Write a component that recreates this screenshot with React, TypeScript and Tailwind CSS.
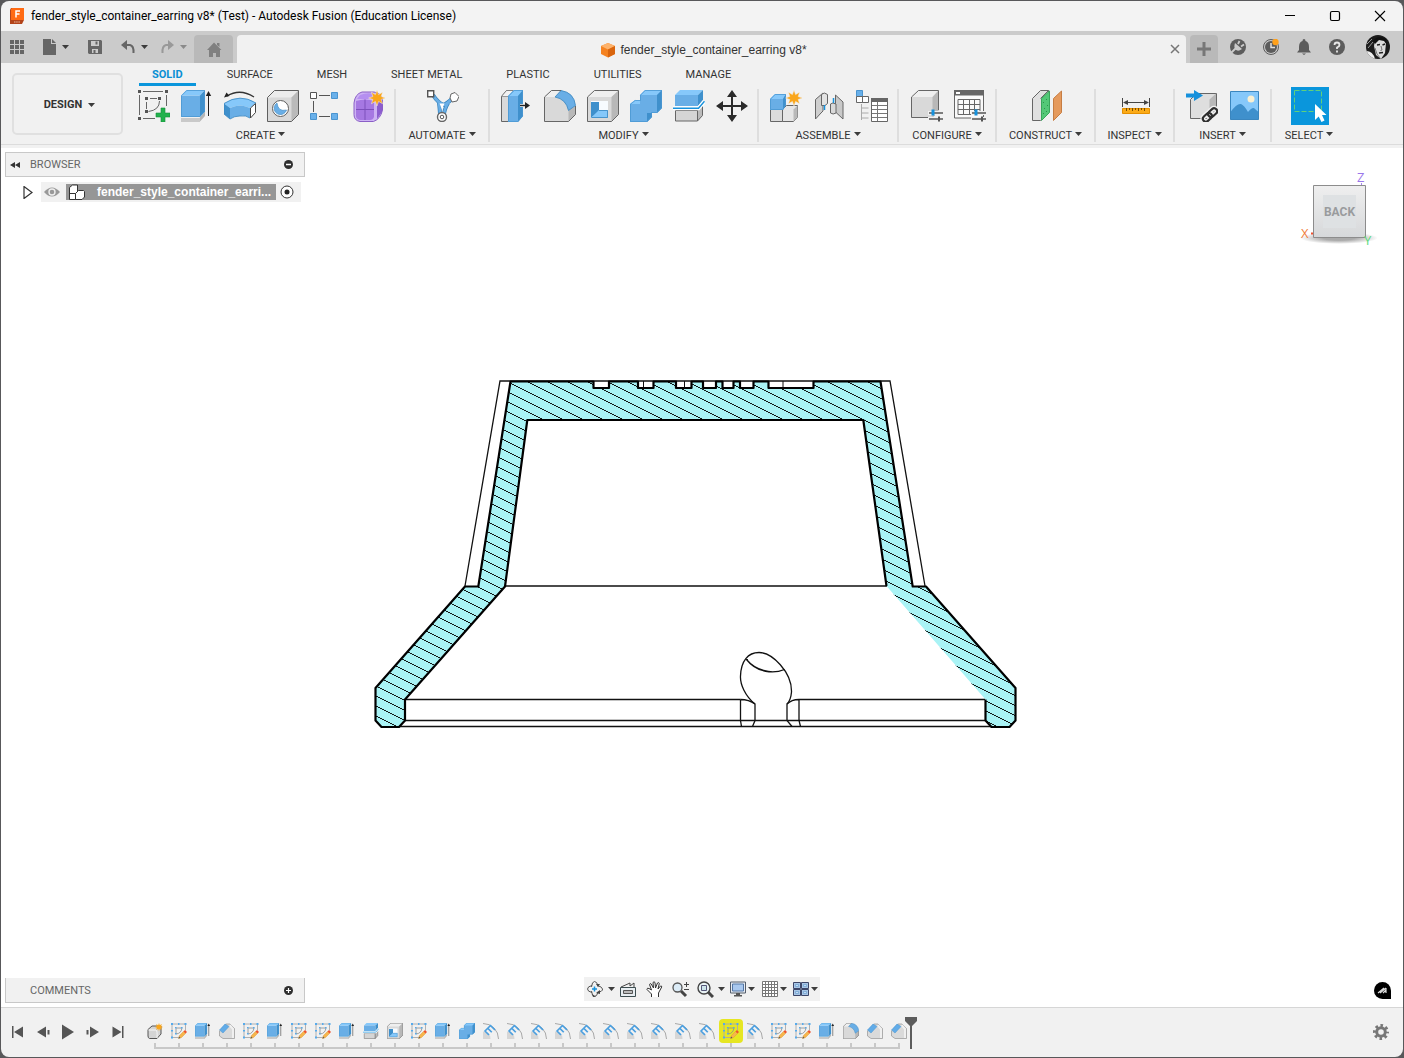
import type { ReactNode } from 'react'

interface IconProps {
  size?: number
}

interface SvgProps extends IconProps {
  box?: number
  children: ReactNode
}

function Svg({ size = 32, box = 32, children }: SvgProps) {
  return (
    <svg
      width={size}
      height={size}
      viewBox={`0 0 ${box} ${box}`}
      fill="none"
      aria-hidden="true"
      className="block shrink-0"
    >
      {children}
    </svg>
  )
}

function Caret({ light = false }: { light?: boolean }) {
  return (
    <svg width="7" height="7" viewBox="0 0 7 7" aria-hidden="true" className="block shrink-0">
      <path d="M0 1h7L3.500 5z" fill={light ? '#8a8a8a' : '#3c3c3c'} />
    </svg>
  )
}

const STAR =
  'M24 0l1.600 4.600 4-2.400-1.400 4.400 4.200 1.400-4.200 1.400 1.400 4.400-4-2.400L24 16l-1.600-4.600-4 2.400 1.400-4.400L15.600 8l4.200-1.400-1.400-4.400 4 2.400z'

/* ---------- Create ---------- */

function SketchIcon({ size }: IconProps) {
  return (
    <Svg size={size}>
      <path d="M5 1.500h20M1.500 5v20M28.500 5v11M5 28.500h12" stroke="#666" />
      <path d="M12 8.500h7M8.500 12v7M21.500 11q0 9-11 10.500" stroke="#666" />
      <path d="M0 0h3v3H0zM27 0h3v3h-3zM0 27h3v3H0zM7 7h3v3H7zM20 7h3v3h-3zM7 20h3v3H7z" fill="#555" />
      <path d="M23 18h4v5h5v4h-5v5h-4v-5h-5v-4h5z" fill="#22b14c" stroke="#16913a" strokeWidth=".6" />
    </Svg>
  )
}

function SketchEditIcon({ size }: IconProps) {
  return (
    <Svg size={size}>
      <path d="M3 2h26v13M2 3v26h13" stroke="#a9a9a9" strokeWidth="1.800" />
      <path d="M10 10h10M10 11v11q11-1 12-13" stroke="#8a8a8a" strokeWidth="1.600" />
      <path d="M0 0h4v4H0zM27 0h4v4h-4zM0 27h4v4H0zM8 8h3v3H8zM20 8h3v3h-3zM8 20h3v3H8zM14 0h3v4h-3zM0 14h4v3H0z" fill="#55aaec" />
      <path d="M15 31l2-6 8-8 4 4-8 8z" fill="#f6b54c" stroke="#e09a34" />
      <path d="M25 17l3-3 4 4-3 3z" fill="#f0532d" />
      <path d="M15 31l1-4 3 3z" fill="#555" />
    </Svg>
  )
}

function ExtrudeIcon({ size }: IconProps) {
  return (
    <Svg size={size}>
      <path d="M0 28h18.500l5.500-6.500v4.500l-5.500 6H0z" fill="#b5b5b5" />
      <path d="M0 28h19v4H0z" fill="#c9c9c9" />
      <path d="M0 5.500h19V27H0z" fill="#69aee6" />
      <path d="M0 5.500L5.500 0H24l-5 5.500z" fill="#86c8fa" />
      <path d="M19 5.500L24 0v21.500L19 27z" fill="#3f90cc" />
      <path d="M.5 5.700L5.700.5h17.800v21L18.700 26.500H.5z" stroke="#4a97d2" strokeWidth=".8" />
      <path d="M27.500 26V5" stroke="#222" />
      <path d="M27.500 1l2.700 5h-5.400z" fill="#222" />
    </Svg>
  )
}

function RevolveIcon() {
  return (
    <Svg>
      <path d="M3 6Q16-2 30 7" stroke="#333" strokeWidth="1.300" />
      <path d="M0 7.500l2.500-5 3 3.600z" fill="#222" />
      <path d="M0 13.500Q16 3 32 13l-6 5Q16 13 6 18z" fill="#86c8fa" />
      <path d="M0 13.500L6 18v11l-6-5z" fill="#3f90cc" />
      <path d="M6 18q10-5 20 0v10q-4-3-10-2-6 0-10 3z" fill="#69aee6" />
      <path d="M0 13.500Q16 3 32 13M0 13.500V24l6 5q4-3 10-3 6-1 10 2" stroke="#3a86bf" strokeWidth=".8" />
      <path d="M26.500 18l5-4.500v9L26.500 28z" fill="#fff" stroke="#444" />
    </Svg>
  )
}

function HoleIcon() {
  return (
    <Svg>
      <path d="M.5 7.500l7-7h24v24l-7 7H.5z" fill="#d9d9d9" />
      <path d="M.5 7.500l7-7h24l-7 7z" fill="#ececec" />
      <path d="M24.500 7.500l7-7v24l-7 7z" fill="#bababa" />
      <path d="M.5 7.500l7-7h24v24l-7 7H.5z" stroke="#5f5f5f" />
      <circle cx="13.500" cy="18.500" r="8" fill="#fff" stroke="#5f5f5f" />
      <path d="M10 13A6.300 6.300 0 1 0 19.500 20Q11 22 10 13z" fill="#69aee6" stroke="#3a86bf" strokeWidth=".6" />
    </Svg>
  )
}

function PatternIcon() {
  return (
    <Svg>
      <path d="M9 5.500h11M3.500 11v11M9 26.500h11" stroke="#555" />
      <path d="M.5 2.500h6v6h-6z" fill="#fff" stroke="#555" />
      <path d="M21.500 2.500h6v6h-6zM.5 23.500h6v6h-6zM21.500 23.500h6v6h-6z" fill="#69b0ea" stroke="#4a94cf" />
    </Svg>
  )
}

function FormIcon() {
  return (
    <Svg>
      <path d="M1 13Q2 4 9 2h12q8 1 8.500 9v9q-2 9-9 11.500H7q-6-1-6-7z" fill="#cdb2f4" stroke="#8a5fc6" />
      <path d="M7 5q7-3 14-1l-3 5H4z" fill="#b58ff0" />
      <path d="M3 11q9-3 18 0v16q-1 3-4 3H7q-4-1-4-4z" fill="#a678e2" />
      <path d="M24 12l5-4v14l-5 7z" fill="#8c5dce" />
      <path d="M12 9.500V30M3 19.500h18" stroke="#7d50bb" />
      <path d={STAR} fill="#faa61a" stroke="#f1f1f1" strokeWidth=".5" />
    </Svg>
  )
}

/* ---------- Automate ---------- */

function AutomateIcon() {
  return (
    <Svg>
      <path d="M6 5q5 8 11 10 5-3 9-7M12 13q1 8 1 12M21 13q-4 7-4 12" stroke="#3a86bf" strokeWidth="4" />
      <path d="M6 5q5 8 11 10 5-3 9-7M12 13q1 8 1 12M21 13q-4 7-4 12" stroke="#69aee6" strokeWidth="2.500" />
      <path d="M12.500 13.500h5l-2.500 6z" fill="#fff" />
      <path d="M.7.700h6v6h-6z" fill="#fff" stroke="#555" strokeWidth="1.400" />
      <path d="M24 4l4-1.500 4 4-2 4.500-5 1-2-4z" fill="#fff" stroke="#666" />
      <circle cx="15" cy="27" r="4.500" fill="#fff" stroke="#666" strokeWidth="1.400" />
      <circle cx="15" cy="27" r="1.800" fill="#fff" stroke="#555" />
    </Svg>
  )
}

/* ---------- Modify ---------- */

function PressPullIcon() {
  return (
    <Svg>
      <path d="M.5 6.500l5-6h7v31H.5z" fill="#dadada" stroke="#666" />
      <path d="M.5 6.500l5-6h7l-5 6z" fill="#f2f2f2" stroke="#666" strokeWidth=".6" />
      <path d="M7 6l6-6h9v26l-5 6H7z" fill="#69aee6" />
      <path d="M7 6l6-6h9l-5 6z" fill="#86c8fa" />
      <path d="M17 6l5-6v26l-5 6z" fill="#3f90cc" />
      <path d="M7.500 6.200L13.200.5h8.300v25.300L16.800 31.500H7.500z" stroke="#4a97d2" strokeWidth=".8" />
      <path d="M19 15.500h7" stroke="#fff" strokeWidth="3" />
      <path d="M19 15.500h7" stroke="#222" strokeWidth="1.400" />
      <path d="M24 12l5 3.500-5 3.500z" fill="#222" />
    </Svg>
  )
}

function FilletIcon({ size }: IconProps) {
  return (
    <Svg size={size}>
      <path d="M.5 7l7-6.500h10q12 3 14 16v8l-7 7H.5z" fill="#d9d9d9" />
      <path d="M.5 7l7-6.500h9L11 7z" fill="#efefef" />
      <path d="M24.500 20l7-4v8.500l-7 7z" fill="#b8b8b8" />
      <path d="M11 7L17 .5q13 2 14.500 15l-7 5Q22 9 11 7z" fill="#69aee6" stroke="#3a86bf" strokeWidth=".8" />
      <path d="M17 .5h-9.500L.5 7v24.500h24l7-7V16" stroke="#666" />
    </Svg>
  )
}

function ChamferIcon() {
  return (
    <Svg size={16}>
      <path d="M1 16L14 2h8l9 9v20H8l-7-5z" fill="#dadada" stroke="#9a9a9a" strokeWidth="1.500" />
      <path d="M20 6l3-3 7 8v19h-4V13z" fill="#f0f0f0" />
      <path d="M1 14L12 2l8 5L8 20z" fill="#62ace8" stroke="#4a97d2" />
    </Svg>
  )
}

function ShellIcon({ size }: IconProps) {
  return (
    <Svg size={size}>
      <path d="M.5 7l7-6.500h24v24l-7 7H.5z" fill="#d9d9d9" />
      <path d="M.5 7l7-6.500h24l-7 6.500z" fill="#efefef" />
      <path d="M24.500 7l7-6.500v24l-7 7z" fill="#b8b8b8" />
      <path d="M.5 7l7-6.500h24v24l-7 7H.5z" stroke="#666" />
      <path d="M4 11h17v17H4z" fill="#f7fbff" />
      <path d="M4 12h8v9l-8 7z" fill="#3f90cc" />
      <path d="M12 20h9v8H4z" fill="#86c8fa" />
      <path d="M12 20.500h8.500v7H4.500" stroke="#3a86bf" strokeWidth=".8" />
    </Svg>
  )
}

function CombineIcon({ size }: IconProps) {
  return (
    <Svg size={size}>
      <path d="M0 14l5-4h5V5l5-5h17v18l-5 5h-5v4l-5 5H0z" fill="#69aee6" />
      <path d="M10 5l5-5h17l-5 5zM0 14l5-4h5v4z" fill="#86c8fa" />
      <path d="M27 5l5-5v18l-5 5zM17 23h5v4l-5 5z" fill="#3f90cc" />
      <path d="M.5 14.200L5.200 10.500h5.300V5.200L15.200.5h16.300v17.300l-4.700 4.700h-5.300v4.300l-4.700 4.700H.5z" stroke="#4a97d2" strokeWidth=".8" />
    </Svg>
  )
}

function SplitIcon({ size }: IconProps) {
  return (
    <Svg size={size}>
      <path d="M2 5l5-5h23l-5 5z" fill="#86c8fa" />
      <path d="M2 5h23v11H2z" fill="#69aee6" />
      <path d="M25 5l5-5v10l-5 6z" fill="#3f90cc" />
      <path d="M2.500 20.500h22v10.500h-22z" fill="#d5d5d5" stroke="#666" />
      <path d="M24.500 20.500l5-5v10l-5 5.500z" fill="#bbb" stroke="#666" />
      <path d="M0 18.300h25.500l6-7" stroke="#fff" strokeWidth="4" />
      <path d="M0 18.300h25.500l6-7" stroke="#1691dc" strokeWidth="1.400" />
    </Svg>
  )
}

function MoveIcon() {
  return (
    <Svg>
      <path d="M16 5v22M5 16h22" stroke="#2b2b2b" strokeWidth="2" />
      <path d="M16 0l5 7H11zM16 32l5-7H11zM0 16l7-5v10zM32 16l-7-5v10z" fill="#2b2b2b" />
    </Svg>
  )
}

/* ---------- Assemble ---------- */

function NewComponentIcon() {
  return (
    <Svg>
      <path d="M.5 19.500h12v12H.5z" fill="#dcdcdc" stroke="#666" />
      <path d="M12.500 19.500l4-4h11v12l-4 4h-11z" fill="#e6e6e6" stroke="#666" />
      <path d="M23.500 19.500l4-4v12l-4 4z" fill="#b9b9b9" />
      <path d="M0 9l5-5h11v11l-3 5H0z" fill="#69aee6" />
      <path d="M0 9l5-5h11l-3 5z" fill="#86c8fa" />
      <path d="M13 9l3-5v11l-3 5z" fill="#3f90cc" />
      <path d="M.5 9.200L5.200 4.500h10.300v11L12.500 19.500H.5z" stroke="#4a97d2" strokeWidth=".8" />
      <path d={STAR} fill="#faa61a" stroke="#f1f1f1" strokeWidth=".5" />
    </Svg>
  )
}

function JointIcon() {
  return (
    <Svg>
      <path d="M2.500 9.500L10 3v18l-2 2-5.500 6z" fill="#cfcfcf" stroke="#666" />
      <path d="M8.500 4.500q2.500-3 6 0v9q-2 3-6 2z" fill="#e3e3e3" stroke="#666" />
      <path d="M22.500 5l7.500 7v17l-7.500-7z" fill="#c9c9c9" stroke="#666" />
      <path d="M17.500 14q2-2 5.500 0v9q-3 2-5.500 0z" fill="#d9d9d9" stroke="#666" />
      <path d="M11.500 15v5M20.500 8v5" stroke="#1691dc" strokeWidth="1.500" />
    </Svg>
  )
}

function PartsListIcon() {
  return (
    <Svg>
      <path d="M.5.500h6v6h-6z" fill="#69b0ea" stroke="#4a94cf" />
      <path d="M.5 6.500h6v6h-6zM6.500 6.500h6v6h-6z" fill="#fff" stroke="#666" />
      <path d="M5.500 14v16M5.500 18h7M5.500 23h7M5.500 28h7" stroke="#aaa" />
      <path d="M15.500 8.500h16v23h-16z" fill="#fff" stroke="#666" />
      <path d="M15 8h17v4H15z" fill="#666" />
      <path d="M16 15.500h15M16 19.500h15M16 23.500h15M16 27.500h15M21.500 12v19" stroke="#777" />
    </Svg>
  )
}

/* ---------- Configure ---------- */

function Sliders() {
  return (
    <>
      <path d="M17 23h15M17 29h15" stroke="#f1f1f1" strokeWidth="4" />
      <path d="M18 23h14M18 29h14" stroke="#555" strokeWidth="1.500" />
      <path d="M22 19.500v6" stroke="#1691dc" strokeWidth="3" />
      <path d="M28 26.500v5" stroke="#555" strokeWidth="2" />
    </>
  )
}

function ConfigureIcon() {
  return (
    <Svg>
      <path d="M.5 7l7-6.500h20v21l-6 6H.5z" fill="#d9d9d9" />
      <path d="M.5 7l7-6.500h20l-6 6.500z" fill="#efefef" />
      <path d="M21.500 7l6-6.500v21l-6 6z" fill="#b8b8b8" />
      <path d="M27.500 20V.5h-20L.5 7v20.500H17" stroke="#666" />
      <Sliders />
    </Svg>
  )
}

function ConfigTableIcon() {
  return (
    <Svg>
      <path d="M.5.500h29v27.500H.5z" fill="#fafafa" stroke="#666" />
      <path d="M0 0h30v5.500H0z" fill="#666" />
      <path d="M2 2h4v2H2z" fill="#fff" />
      <path d="M4 9.500h22v15H4zM4 14.500h22M4 19.500h22M9.500 9.500v15M15.500 9.500v15M20.500 9.500v15" stroke="#666" />
      <Sliders />
    </Svg>
  )
}

function ConstructIcon() {
  return (
    <Svg>
      <path d="M1.500 8.500l8-8h8v22l-8 8h-8z" fill="#e0e0e0" stroke="#666" />
      <path d="M9.500 8.500l8-8" stroke="#666" />
      <path d="M10.500 8.500l8-7.500v21.500l-8 8z" fill="#53c877" stroke="#39a65b" />
      <path d="M12.500 12v1M15.500 9v1M13.500 18v1M16.500 15v1M12.500 23v1M15.500 21v1" stroke="#2e8f4d" />
      <path d="M22.500 8.500l8-7.500v21.500l-8 8z" fill="#e59a5d" stroke="#c67d43" />
    </Svg>
  )
}

function MeasureIcon() {
  return (
    <Svg>
      <path d="M2.500 8v9M29.500 8v9M4 12.500h24" stroke="#444" />
      <path d="M3 12.500l5-2.500v5zM29 12.500l-5-2.500v5z" fill="#444" />
      <path d="M2.500 18.500h27v5h-27z" fill="#fbab18" stroke="#e58f00" />
      <path d="M6.500 18v3M9.500 18v2M12.500 18v3M15.500 18v2M18.500 18v3M21.500 18v2M24.500 18v3" stroke="#7a4e00" />
    </Svg>
  )
}

function InsertIcon() {
  return (
    <Svg>
      <path d="M4.500 9.500l6-6h20v20l-5 5h-21z" fill="#dedede" stroke="#666" />
      <path d="M23.500 9.500l6.500-6v19l-6.500 6z" fill="#b8b8b8" />
      <path d="M0 3.500h8V0l9 5.500L8 11V7.500H0z" fill="#1691dc" />
      <g transform="rotate(-42 24 25)" strokeWidth="5" stroke="#f1f1f1">
        <rect x="15.500" y="22" width="10" height="6" rx="3" />
        <rect x="22.500" y="22" width="10" height="6" rx="3" />
      </g>
      <g transform="rotate(-42 24 25)" strokeWidth="2.200" stroke="#2f2f2f">
        <rect x="15.500" y="22" width="10" height="6" rx="3" />
        <rect x="22.500" y="22" width="10" height="6" rx="3" />
      </g>
    </Svg>
  )
}

function CanvasImageIcon() {
  return (
    <Svg>
      <path d="M1.500 1.500h28v28h-28z" fill="#86c8fa" />
      <path d="M1.500 22Q8 13 12 14q3 1 7 8 5-6 7-3l3.500 3v7.500h-28z" fill="#3f90cc" />
      <circle cx="22" cy="9" r="3.500" fill="#faf0d2" />
      <path d="M1.500 1.500h28v28h-28z" stroke="#3a86bf" />
    </Svg>
  )
}

function SelectIcon() {
  return (
    <Svg size={38} box={38}>
      <path d="M0 0h38v38H0z" fill="#0a96dc" />
      <path d="M3.500 3.500h27v21h-27z" stroke="#5fd07c" strokeDasharray="5 2" />
      <path d="M24 17v16l3.700-3.500L30.500 35l3-1.500L31 28h4.500z" fill="#fff" />
    </Svg>
  )
}

/* ---------- Timeline ---------- */

function BaseFeatureIcon() {
  return (
    <Svg size={16}>
      <path d="M2 13l8-7h18v16l-8 9H5q-3-1-3-5z" fill="#d4d4d4" stroke="#555" strokeWidth="2" />
      <path d="M3 14h15q3 1 2 16" stroke="#f7f7f7" strokeWidth="2" />
      <path d={STAR} fill="#faa61a" />
    </Svg>
  )
}

function EmbossIcon() {
  return (
    <Svg size={16}>
      <path d="M0 1q13 0 22 9 9 9 9 22" stroke="#a8a8a8" strokeWidth="2" />
      <path d="M0 17q15 0 15 15H0z" fill="#d6d6d6" />
      <path d="M3 17L16 4M4 16l8 8M9.500 10.500l8 8M15 5l9 9" stroke="#4a9fe0" strokeWidth="3.500" />
    </Svg>
  )
}

interface Group {
  label: string
  width: string
  icons: [string, ReactNode][]
}

const GROUPS: Group[] = [
  {
    label: 'CREATE',
    width: 'w-[269px]',
    icons: [
      ['Create Sketch', <SketchIcon />],
      ['Extrude', <ExtrudeIcon />],
      ['Revolve', <RevolveIcon />],
      ['Hole', <HoleIcon />],
      ['Pattern', <PatternIcon />],
      ['Create Form', <FormIcon />],
    ],
  },
  { label: 'AUTOMATE', width: 'w-[94px]', icons: [['Automate', <AutomateIcon />]] },
  {
    label: 'MODIFY',
    width: 'w-[269px]',
    icons: [
      ['Press Pull', <PressPullIcon />],
      ['Fillet', <FilletIcon />],
      ['Shell', <ShellIcon />],
      ['Combine', <CombineIcon />],
      ['Split Body', <SplitIcon />],
      ['Move', <MoveIcon />],
    ],
  },
  {
    label: 'ASSEMBLE',
    width: 'w-[140px]',
    icons: [
      ['New Component', <NewComponentIcon />],
      ['Joint', <JointIcon />],
      ['Parts List', <PartsListIcon />],
    ],
  },
  {
    label: 'CONFIGURE',
    width: 'w-[98px]',
    icons: [
      ['Configure', <ConfigureIcon />],
      ['Configuration Table', <ConfigTableIcon />],
    ],
  },
  { label: 'CONSTRUCT', width: 'w-[99px]', icons: [['Offset Plane', <ConstructIcon />]] },
  { label: 'INSPECT', width: 'w-[79px]', icons: [['Measure', <MeasureIcon />]] },
  {
    label: 'INSERT',
    width: 'w-[97px]',
    icons: [
      ['Insert Derive', <InsertIcon />],
      ['Canvas', <CanvasImageIcon />],
    ],
  },
  { label: 'SELECT', width: 'w-[74px]', icons: [['Select', <SelectIcon />]] },
]

const TABS = ['SOLID', 'SURFACE', 'MESH', 'SHEET METAL', 'PLASTIC', 'UTILITIES', 'MANAGE']

const FEATURE_ICONS: Record<string, ReactNode> = {
  base: <BaseFeatureIcon />,
  sketch: <SketchEditIcon size={16} />,
  extrude: <ExtrudeIcon size={16} />,
  chamfer: <ChamferIcon />,
  split: <SplitIcon size={16} />,
  shell: <ShellIcon size={16} />,
  combine: <CombineIcon size={16} />,
  emboss: <EmbossIcon />,
  fillet: <FilletIcon size={16} />,
}

const FEATURES = [
  'base', 'sketch', 'extrude', 'chamfer', 'sketch', 'extrude', 'sketch', 'sketch',
  'extrude', 'split', 'shell', 'sketch', 'extrude', 'combine', 'emboss', 'emboss',
  'emboss', 'emboss', 'emboss', 'emboss', 'emboss', 'emboss', 'emboss', 'emboss',
  'sketch', 'emboss', 'sketch', 'sketch', 'extrude', 'fillet', 'chamfer', 'chamfer',
]
const ACTIVE_FEATURE = 24

function TitleBar() {
  return (
    <header className="flex h-[30px] shrink-0 items-center bg-[#f3f3f3] pl-2">
      <Svg size={16} box={16}>
        <path d="M2 0h13v12l-2 4H1V2z" fill="#b3441a" />
        <path d="M3 0h12v12H2V1z" fill="#ff6a13" />
        <path d="M7 9.500V3h4M7 6h3.500" stroke="#fff" strokeWidth="1.500" />
        <path d="M5 14h6" stroke="#e9b9a2" strokeWidth="1.200" strokeDasharray="1.500 .7" />
      </Svg>
      <h1 className="ml-1.5 text-xs text-black">
        fender_style_container_earring v8* (Test) - Autodesk Fusion (Education License)
      </h1>
      <div className="ml-auto flex h-full">
        <button aria-label="Minimize" className="flex w-[45px] items-center justify-center">
          <Svg size={12} box={12}>
            <path d="M1 5.500h10" stroke="#000" />
          </Svg>
        </button>
        <button aria-label="Maximize" className="flex w-[45px] items-center justify-center">
          <Svg size={12} box={12}>
            <rect x="1.500" y="1.500" width="9" height="9" rx="1.500" stroke="#000" strokeWidth="1.200" />
          </Svg>
        </button>
        <button aria-label="Close" className="flex w-[46px] items-center justify-center">
          <Svg size={12} box={12}>
            <path d="M1 1l10 10M11 1L1 11" stroke="#000" strokeWidth="1.100" />
          </Svg>
        </button>
      </div>
    </header>
  )
}

function DocumentBar() {
  return (
    <div className="flex h-8 shrink-0 items-stretch bg-[#cbcbcb]">
      <div className="flex w-[193px] shrink-0 items-center pl-[9px]">
        <button aria-label="Data panel">
          <Svg size={14} box={14}>
            <path d="M0 0h4v4H0zM5 0h4v4H5zM10 0h4v4h-4zM0 5h4v4H0zM5 5h4v4H5zM10 5h4v4h-4zM0 10h4v4H0zM5 10h4v4H5zM10 10h4v4h-4z" fill="#666" />
          </Svg>
        </button>
        <button aria-label="File" className="ml-[18px] flex items-center gap-1">
          <Svg size={16} box={16}>
            <path d="M1 0h8v5h5v11H1zM10 0l4 4h-4z" fill="#666" />
          </Svg>
          <Caret />
        </button>
        <button aria-label="Save" className="ml-[18px]">
          <Svg size={16} box={16}>
            <path d="M1 1h13l1 1v13H2l-1-1zM4 2v5h8V2zM5 10v4h6v-4z" fill="#666" fillRule="evenodd" />
            <path d="M8.500 2.500h2v3h-2zM6.500 11h2v3h-2z" fill="#666" />
          </Svg>
        </button>
        <button aria-label="Undo" className="ml-[18px] flex items-center gap-1">
          <Svg size={16} box={16}>
            <path d="M3 6h6q4 1 3.500 8" stroke="#666" strokeWidth="2" />
            <path d="M0 6l6-5v10z" fill="#666" />
          </Svg>
          <Caret />
        </button>
        <button aria-label="Redo" className="ml-3 flex items-center gap-1">
          <Svg size={16} box={16}>
            <path d="M11 6H6q-4 1-3.500 8" stroke="#999" strokeWidth="2" />
            <path d="M14 6L8 1v10z" fill="#999" />
          </Svg>
          <Caret light />
        </button>
      </div>
      <button
        aria-label="Home"
        className="mt-1 flex w-[39px] shrink-0 items-center justify-center rounded-t bg-[#b9b9b9]"
      >
        <Svg size={16} box={16}>
          <path d="M8 1.500l7.500 7.500H14v7h-4v-4H7v4H3V9H1zM11 2h2.500v4L11 4z" fill="#808080" />
        </Svg>
      </button>
      <div className="mt-1 ml-1 flex flex-1 items-center rounded-t bg-[#f1f1f1] text-xs text-[#333]">
        <div className="flex flex-1 items-center justify-center gap-1 pt-0.5 font-['Liberation_Sans',sans-serif]">
          <Svg size={16} box={16}>
            <path d="M1 4l7-3 7 3v8l-7 3.500L1 12z" fill="#f58220" />
            <path d="M1 4l7-3 7 3-7 3.500z" fill="#fdb26b" />
            <path d="M8 7.500L15 4v8l-7 3.500z" fill="#d9650e" />
          </Svg>
          fender_style_container_earring v8*
        </div>
        <button aria-label="Close tab" className="mr-1.5">
          <Svg size={10} box={10}>
            <path d="M1 1l8 8M9 1L1 9" stroke="#777" strokeWidth="1.500" />
          </Svg>
        </button>
      </div>
      <button
        aria-label="New tab"
        className="mt-1 ml-1 flex w-7 items-center justify-center rounded-t bg-[#b9b9b9]"
      >
        <Svg size={14} box={14}>
          <path d="M7 0v14M0 7h14" stroke="#777" strokeWidth="3" />
        </Svg>
      </button>
      <div className="flex items-center gap-[17px] pr-[13px] pl-3">
        <button aria-label="Extensions">
          <Svg size={16} box={16}>
            <circle cx="8" cy="8" r="8" fill="#5c5c5c" />
            <path d="M1 14l6-6M9.500 2L8 5M14 5.500l-3 2" stroke="#cbcbcb" strokeWidth="1.800" />
            <path d="M5 4l7 6Q8 13 5.500 10.500 3.500 8 5 4z" fill="#cbcbcb" />
          </Svg>
        </button>
        <button aria-label="Job status">
          <Svg size={16} box={16}>
            <circle cx="8" cy="8" r="7.500" fill="#cbcbcb" stroke="#5c5c5c" />
            <circle cx="8" cy="8" r="6" fill="#5c5c5c" />
            <path d="M8 4v4.500h4" stroke="#e0e0e0" strokeWidth="1.500" />
            <circle cx="12.500" cy="3" r="3.200" fill="#ffa01a" />
          </Svg>
        </button>
        <button aria-label="Notifications">
          <Svg size={16} box={16}>
            <path d="M8 0q1.500 0 1.500 2Q13 3 13 8v3l2 2.500H1L3 11V8q0-5 3.500-6Q6.500 0 8 0zM6 14.500h4L8 16z" fill="#5c5c5c" />
          </Svg>
        </button>
        <button aria-label="Help">
          <Svg size={16} box={16}>
            <circle cx="8" cy="8" r="8" fill="#5c5c5c" />
            <path d="M5.500 6q0-2.500 2.500-2.500T10.500 6Q10.500 7.500 8 8.500v1.500M8 11.500v2" stroke="#e6e6e6" strokeWidth="1.800" />
          </Svg>
        </button>
        <button aria-label="Account" className="ml-1 overflow-hidden rounded-full">
          <Svg size={24} box={24}>
            <path d="M0 0h24v24H0z" fill="#1c1c1c" />
            <path d="M9 5q8-5 11 3l-1 10-4 6-5-4-2-9z" fill="#dcdcdc" />
            <path d="M7 6Q12-1 20 4l1 6-3-4-5-1-4 4z" fill="#111" />
            <path d="M11 10l3-.5M16.500 10l2.500-1M13 18l4-.5" stroke="#222" strokeWidth="1.400" />
            <path d="M0 16q7 0 9 8H0z" fill="#ededed" />
            <path d="M15 11l1 4-1.500.5M9 13l2 6 3 4" stroke="#777" />
            <path d="M1 9l5-5M2 13l5-6" stroke="#999" />
          </Svg>
        </button>
      </div>
    </div>
  )
}

function Ribbon() {
  return (
    <div className="flex h-[85px] shrink-0 flex-col border-b-[3px] border-[#f1f1f1] bg-[#f1f1f1] text-[11px] leading-[14px] text-[#333]">
      <div className="flex flex-1 border-b border-[#dcdcdc]">
        <button className="mt-2.5 ml-[11px] flex h-[62px] w-[111px] shrink-0 items-center justify-center gap-1.5 rounded-[5px] border-2 border-[#e0e0e0] pt-0.5 pl-1 font-bold">
          DESIGN
          <Caret />
        </button>
        <div className="flex flex-1 flex-col pl-1">
          <nav className="flex h-[23px] gap-[18px] pl-3">
            {TABS.map((tab, i) => (
              <button
                key={tab}
                className={`border-b-[3px] px-[13px] pt-[3px] whitespace-nowrap ${
                  i === 0 ? 'border-[#0a96dc] font-bold text-[#0a8fd4]' : 'border-transparent'
                }`}
              >
                {tab}
              </button>
            ))}
          </nav>
          <div className="mt-px flex flex-1">
            {GROUPS.map((group, i) => (
              <div key={group.label} className={`flex shrink-0 ${group.width}`}>
                <div className="flex flex-1 flex-col items-center">
                  <div className="flex h-[38px] items-center gap-[11px] pl-0.5">
                    {group.icons.map(([name, icon]) => (
                      <button key={name} aria-label={name}>
                        {icon}
                      </button>
                    ))}
                  </div>
                  <button className="mt-1 flex items-start gap-[3px] whitespace-nowrap">
                    {group.label}
                    <span className="pt-0.5">
                      <Caret />
                    </span>
                  </button>
                </div>
                {i < GROUPS.length - 1 && <div className="my-0.5 w-0.5 bg-[#dedede]" />}
              </div>
            ))}
          </div>
        </div>
      </div>
    </div>
  )
}

const SECTION =
  'M510.500 381.500H593.500V388H609V381.500H638V388H653.500V381.500H676V388H691.500V381.500H703V388H716V381.500H722.500V388H733.500V381.500H740V388H753.500V381.500H768.500V388H813.500V381.500H880.500L912.700 586.500H926L1015.500 688V720.500L1009.500 727H991.500L985.500 720.500V699.500L886.500 586L863.300 420H527.300L505 586.500L405 699.500V720.500L399 727H381.500L375.500 720.500V688L465 586.500H478.300z'

// The inner edge of the right flank stays without an outline
const OUTLINE =
  'M886.500 586L863.300 420H527.300L505 586.500L405 699.500V720.500L399 727H381.500L375.500 720.500V688L465 586.500H478.300L510.500 381.500H593.500V388H609V381.500H638V388H653.500V381.500H676V388H691.500V381.500H703V388H716V381.500H722.500V388H733.500V381.500H740V388H753.500V381.500H768.500V388H813.500V381.500H880.500L912.700 586.500H926L1015.500 688V720.500L1009.500 727H991.500L985.500 720.500V699.500'

const HATCH = Array.from({ length: 66 }, (_, i) => -102 + i * 10)

function SectionView() {
  return (
    <svg
      width="670"
      height="370"
      viewBox="360 370 670 370"
      fill="none"
      role="img"
      aria-label="Section view"
      className="block shrink-0"
    >
      <clipPath id="section">
        <path d={SECTION} />
      </clipPath>
      <path d={SECTION} fill="#a9f3f5" />
      <g clipPath="url(#section)" stroke="#000" strokeWidth=".9" shapeRendering="crispEdges">
        {HATCH.map(c => (
          <path key={c} d={`M360 ${c + 180}L1030 ${c + 515}`} />
        ))}
      </g>
      <g stroke="#111" strokeWidth="1.300">
        <path d="M465 586L500 381H890L925 586" />
        <path d="M643.500 381v7M684.500 381v7M783 381v7" strokeWidth="1" />
        <path d="M505 586H887M405 699.500H740.500M799 699.500H985M405 720.500H985M399 726.500H991" />
        <path d="M755 704C745 696 740 684 740.500 676C741 661 748 652.500 759 652.500C772 652.500 792 672 791.500 692C791 698 789 702 787 704" />
        <path d="M740.500 699.500C746 699.500 751 701 755 704V720.500L752.500 726.500M740.500 699.500V720.500L741.500 726.500M799 699.500C795 699.500 790 701 787 704V720.500L792 726.500M799 699.500V720.500L800.500 726.500" />
        <path d="M746.500 659.500C755 670 771 675 784.500 669.500M746.500 659.500C757 673 774 674 784.500 669.500" />
      </g>
      <path d={OUTLINE} stroke="#000" strokeWidth="2.200" strokeLinejoin="round" />
    </svg>
  )
}

function ViewCube() {
  return (
    <div className="absolute top-[20px] right-[26px]">
      <svg width="80" height="80" viewBox="1297 168 80 80" role="img" aria-label="View cube, back">
        <defs>
          <linearGradient id="cube" x1="0" y1="0" x2="0" y2="1">
            <stop offset="0" stopColor="#efefef" />
            <stop offset="1" stopColor="#d6d8da" />
          </linearGradient>
          <radialGradient id="shade">
            <stop offset=".4" stopColor="#aaa" />
            <stop offset="1" stopColor="#aaa" stopOpacity="0" />
          </radialGradient>
        </defs>
        <ellipse cx="1339" cy="238" rx="39" ry="6" fill="url(#shade)" />
        <path d="M1313.500 185.500h52v52h-52z" fill="url(#cube)" stroke="#8c8c8c" />
        <path d="M1323 195h33v33h-33z" fill="#dee1e3" />
        <text x="1339.500" y="216" textAnchor="middle" className="fill-[#999b9d] font-[Roboto,sans-serif] text-[12px] font-bold">
          BACK
        </text>
        <g className="font-['Open_Sans',sans-serif] text-[13px]">
          <text x="1357" y="182" className="fill-[#9a76ea]">Z</text>
          <text x="1301" y="238" className="fill-[#f08040]">X</text>
          <text x="1364" y="245" className="fill-[#5fdc80]">Y</text>
        </g>
        <path d="M1311 233.500h2" stroke="#f05030" strokeWidth="2" />
        <path d="M1361.500 183v2" stroke="#a585ee" />
      </svg>
    </div>
  )
}

function BrowserPanel() {
  return (
    <section className="absolute top-1 left-1 w-[300px] text-[11px] text-[#666]">
      <div className="flex h-[25px] items-center border border-[#c8c8c8] bg-[#f1f1f1] pr-[11px] pl-1">
        <button aria-label="Collapse browser">
          <Svg size={10} box={10}>
            <path d="M5 2v6L0 5zM10 2v6L5 5z" fill="#333" />
          </Svg>
        </button>
        <h2 className="ml-2.5 pt-px">BROWSER</h2>
        <button aria-label="Browser options" className="ml-auto">
          <Svg size={9} box={9}>
            <circle cx="4.500" cy="4.500" r="4.500" fill="#2f2f2f" />
            <path d="M2 4.500h5" stroke="#fff" strokeWidth="1.300" />
          </Svg>
        </button>
      </div>
      <div className="mt-[5px] flex h-5 items-center pl-[17px]">
        <button aria-label="Expand component">
          <Svg size={13} box={13}>
            <path d="M2 .5v12l8-6z" fill="#fff" stroke="#333" strokeWidth="1.200" />
          </Svg>
        </button>
        <div className="ml-1.5 flex h-full w-[260px] items-center bg-[#f1f1f1] pl-[3px]">
          <button aria-label="Toggle visibility">
            <Svg size={16} box={16}>
              <path d="M0 8q8-9 16 0-8 9-16 0z" fill="#999" />
              <circle cx="8" cy="8" r="3" stroke="#eee" strokeWidth="1.400" />
            </Svg>
          </button>
          <button className="ml-[6px] flex h-4 w-[210px] items-center bg-[#969696] pl-0.5 font-['Liberation_Sans',sans-serif] text-xs font-bold text-white">
            <Svg size={17} box={17}>
              <path d="M1.500 3.500l3-2.500h5v14.500h-8z" fill="#fff" stroke="#333" />
              <path d="M7.500 9.500l3-3h5l1 1v5.500L14 15.500H7.500z" fill="#fff" stroke="#333" />
              <path d="M1.500 9.500h6" stroke="#333" />
            </Svg>
            <span className="ml-3">fender_style_container_earri...</span>
          </button>
          <label className="ml-1 flex">
            <input type="radio" name="active-component" defaultChecked aria-label="Activate component" className="peer sr-only" />
            <Svg size={14} box={14}>
              <circle cx="7" cy="7" r="6" fill="#fff" stroke="#333" />
              <circle cx="7" cy="7" r="2.500" fill="#222" />
            </Svg>
          </label>
        </div>
      </div>
    </section>
  )
}

function CommentsPanel() {
  return (
    <section className="absolute bottom-1 left-1 flex h-[25px] w-[300px] items-center border border-t-0 border-[#c8c8c8] bg-[#f1f1f1] pr-[11px] pl-6 text-[11px] text-[#666]">
      <h2 className="pt-0.5">COMMENTS</h2>
      <button aria-label="Add comment" className="ml-auto">
        <Svg size={9} box={9}>
          <circle cx="4.500" cy="4.500" r="4.500" fill="#2f2f2f" />
          <path d="M2 4.500h5M4.500 2v5" stroke="#fff" strokeWidth="1.200" />
        </Svg>
      </button>
    </section>
  )
}

function NavBar() {
  return (
    <div className="absolute bottom-1.5 left-[583px] flex h-6 w-[236px] items-center bg-[#f1f1f1] pl-[3px]">
      <button aria-label="Orbit" className="flex items-center gap-[5px]">
        <Svg size={16} box={16}>
          <path d="M5 4.500Q.5 5.500.5 8T5 11.500M10 4.500q5 1 5.500 3.500T10 11.500" stroke="#555" />
          <path d="M4.500 6Q5 .5 7.500.5T11 5M4.500 10q.5 5.500 3 5.500T11 11" stroke="#555" />
          <path d="M5 8h5M7.500 5.500v5" stroke="#1691dc" strokeWidth="1.500" />
          <path d="M9 3h4l-2 3zM13 9v4l-4-1zM5 13l4 2.500-3 .5z" fill="#444" />
        </Svg>
        <Caret />
      </button>
      <button aria-label="Look at" className="ml-[5px]">
        <Svg size={16} box={16}>
          <path d="M.5 6.500h15v9H.5z" fill="#e8eef2" stroke="#3d4d50" />
          <path d="M3.500 9.500h9v3h-9z" fill="#bbb" stroke="#555" />
          <path d="M1 6l9-4v3l4-3v4" stroke="#444" />
        </Svg>
      </button>
      <button aria-label="Pan" className="ml-2.5">
        <Svg size={17} box={17}>
          <path d="M5.500 16v-3L1 8.500q0-2 2-1L5.500 9 3.500 3.500q.5-1.500 1.700-.5L7.500 7 7 1.500q1-1.500 2 0L9.500 7l2-5q1.500-1 1.800.5L12 8l2.500-3q1.500-.3 1.200 1L12.500 12v4" fill="#fff" stroke="#333" />
        </Svg>
      </button>
      <button aria-label="Zoom" className="ml-[9px]">
        <Svg size={17} box={17}>
          <circle cx="5.500" cy="6.500" r="4.500" fill="#dcecf7" stroke="#555" strokeWidth="1.300" />
          <path d="M9 10l5 5" stroke="#444" strokeWidth="3" />
          <path d="M12 3.500h5M14.500 1v5M12 8.500h5" stroke="#444" />
        </Svg>
      </button>
      <button aria-label="Fit" className="ml-2 flex items-center gap-1">
        <Svg size={17} box={17}>
          <circle cx="7" cy="7" r="6" fill="#e9f3f5" stroke="#444" strokeWidth="1.400" />
          <path d="M4.500 4.500h5v5h-5z" fill="#cde5ea" stroke="#557" />
          <path d="M11 11l5 5" stroke="#444" strokeWidth="3" />
        </Svg>
        <Caret />
      </button>
      <button aria-label="Display settings" className="ml-[5px] flex items-center gap-0.5">
        <Svg size={16} box={16}>
          <path d="M.5 1h15v11H.5z" fill="#e6ebf2" stroke="#555e6b" />
          <path d="M2.500 3h11v7h-11z" fill="#a9c8ee" stroke="#5376a6" />
          <path d="M6 12h4v2h2v1.500H4V14h2z" fill="#555" />
        </Svg>
        <Caret />
      </button>
      <button aria-label="Grid and snaps" className="ml-[7px] flex items-center gap-0.5">
        <Svg size={16} box={16}>
          <path d="M.5.500h15v15H.5zM3.500.500v15M6.500.500v15M9.500.500v15M12.500.500v15M.5 3.500h15M.5 6.500h15M.5 9.500h15M.5 12.500h15" fill="#fff" stroke="#777" />
        </Svg>
        <Caret />
      </button>
      <button aria-label="Viewports" className="ml-[6px] flex items-center gap-0.5">
        <Svg size={16} box={16}>
          <path d="M.5 1.500h7v6h-7zM8.500 1.500h7v6h-7zM.5 8.500h7v6h-7zM8.500 8.500h7v6h-7z" fill="#a9c6e6" stroke="#3d4668" />
          <path d="M2.500 3.500h3v2h-3zM10.500 3.500h3v2h-3zM2.500 10.500h3v2h-3zM10.500 10.500h3v2h-3z" fill="#c4dcf2" stroke="#6c9fd0" strokeWidth=".7" />
        </Svg>
        <Caret />
      </button>
    </div>
  )
}

const PLAYBACK: [string, string][] = [
  ['Go to start', 'M2 2h1.500v12H2zM13 2.500v11L4 8z'],
  ['Step back', 'M11 2.500v11L2 8zM12.500 6h2v4.500h-2z'],
  ['Play', 'M2 .5v15L14 8z'],
  ['Step forward', 'M5 2.500v11L14 8zM1.500 6h2v4.500h-2z'],
  ['Go to end', 'M12 2h1.500v12H12zM2.500 2.500v11l9-5.500z'],
]

function Timeline() {
  return (
    <footer className="flex h-[50px] shrink-0 border-t border-[#d6d6d6] bg-[#f1f1f1]">
      <div className="flex h-[48px] w-[142px] shrink-0 items-center gap-[9px] pl-[9px]">
        {PLAYBACK.map(([name, d]) => (
          <button key={name} aria-label={name}>
            <Svg size={16} box={16}>
              <path d={d} fill="#555" />
            </Svg>
          </button>
        ))}
      </div>
      <div className="mt-[11px]">
        <div className="flex">
          {FEATURES.map((feature, i) => (
            <div key={i} className="flex w-6 flex-col items-center">
              <button
                aria-label={feature}
                className={`flex h-6 w-6 items-center justify-center rounded-sm ${i === ACTIVE_FEATURE ? 'bg-[#e6e622]' : ''}`}
              >
                {FEATURE_ICONS[feature]}
              </button>
              <div className="h-1 w-0.5 bg-[#c8c8c8]" />
            </div>
          ))}
        </div>
        <div className="mx-[11px] h-0.5 bg-[#c8c8c8]" />
      </div>
      <button aria-label="History marker" className="mt-[9px] -ml-1.5 self-start">
        <svg width="12" height="32" viewBox="0 0 12 32" aria-hidden="true" className="block">
          <path d="M0 0h12v4L7 9v23H5V9L0 4z" fill="#5c5c5c" />
        </svg>
      </button>
      <button aria-label="Timeline settings" className="mr-3.5 ml-auto h-12">
        <Svg size={16} box={16}>
          <circle cx="8" cy="8" r="4.300" stroke="#777" strokeWidth="3" />
          <circle cx="8" cy="8" r="6.500" stroke="#777" strokeWidth="3" strokeDasharray="2.550 2.550" strokeDashoffset="1.300" />
        </Svg>
      </button>
    </footer>
  )
}

export default function App() {
  return (
    <div className="h-screen min-h-[400px] overflow-hidden bg-[#58585a] p-px font-[Roboto,sans-serif]">
      <div className="flex h-full flex-col overflow-hidden rounded-lg">
        <TitleBar />
        <DocumentBar />
        <Ribbon />
        <main className="relative flex flex-1 justify-center overflow-hidden bg-white pt-[222px] pr-[14px]">
          <SectionView />
          <BrowserPanel />
          <ViewCube />
          <CommentsPanel />
          <NavBar />
          <button aria-label="Assistant" className="absolute right-3 bottom-2">
            <Svg size={17} box={17}>
              <path d="M8.500 0a8.500 8.500 0 0 1 8.500 8.500V17H8.500a8.500 8.500 0 0 1 0-17z" fill="#000" />
              <path d="M4 11l6-5M6 11l6-5M9 11l3-3M12 6v5" stroke="#ddd" strokeWidth="1.200" />
            </Svg>
          </button>
        </main>
        <Timeline />
      </div>
    </div>
  )
}
